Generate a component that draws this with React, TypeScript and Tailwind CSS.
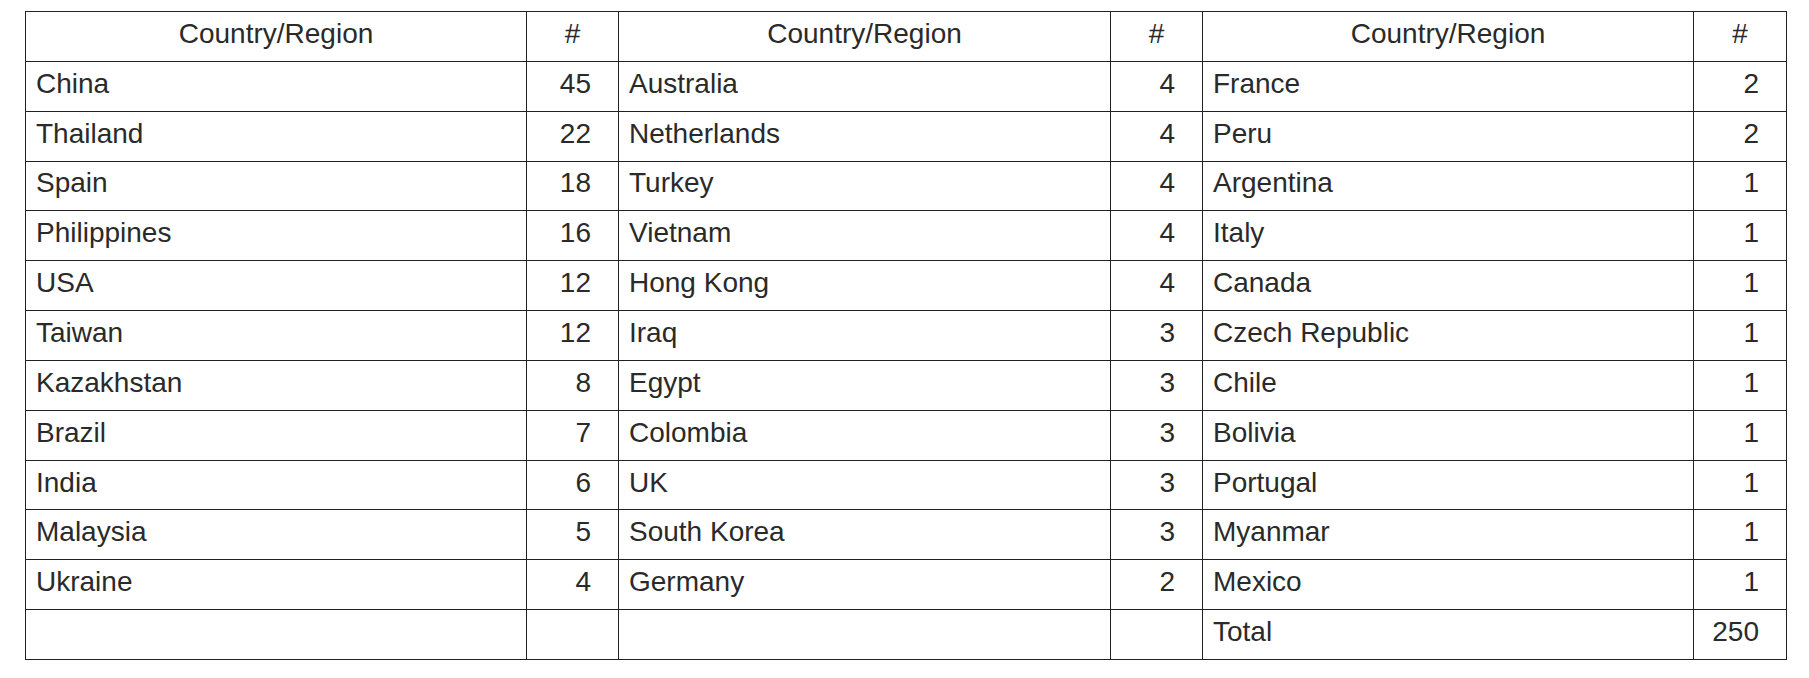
import React from "react";

const rows: [string, string, string, string, string, string][] = [
  ["China", "45", "Australia", "4", "France", "2"],
  ["Thailand", "22", "Netherlands", "4", "Peru", "2"],
  ["Spain", "18", "Turkey", "4", "Argentina", "1"],
  ["Philippines", "16", "Vietnam", "4", "Italy", "1"],
  ["USA", "12", "Hong Kong", "4", "Canada", "1"],
  ["Taiwan", "12", "Iraq", "3", "Czech Republic", "1"],
  ["Kazakhstan", "8", "Egypt", "3", "Chile", "1"],
  ["Brazil", "7", "Colombia", "3", "Bolivia", "1"],
  ["India", "6", "UK", "3", "Portugal", "1"],
  ["Malaysia", "5", "South Korea", "3", "Myanmar", "1"],
  ["Ukraine", "4", "Germany", "2", "Mexico", "1"],
  ["", "", "", "", "Total", "250"],
];

export default function App() {
  return (
    <div className="w-[1809px] h-[678px] bg-white pt-[11px] pl-[25px]" style={{ fontFamily: '"Liberation Sans", Arial, sans-serif' }}>
      <div className="grid grid-cols-[501px_92px_492px_92px_491px_93px] grid-rows-[repeat(13,1fr)] w-[1762px] h-[649px] border-l border-t border-[#222] text-[28px] text-[#2a2a2a]">
        {["Country/Region", "#", "Country/Region", "#", "Country/Region", "#"].map((h, i) => (
          <div key={"h" + i} className="border-r border-b border-[#222] flex items-center justify-center pb-[5px]">
            {h}
          </div>
        ))}
        {rows.map((r, ri) =>
          r.map((c, ci) => (
            <div
              key={ri + "-" + ci}
              className={
                ci % 2 === 0
                  ? "border-r border-b border-[#222] flex items-center pl-[10px] pb-[5px]"
                  : "border-r border-b border-[#222] flex items-center justify-end pr-[27px] pb-[5px]"
              }
            >
              {c}
            </div>
          ))
        )}
      </div>
    </div>
  );
}
